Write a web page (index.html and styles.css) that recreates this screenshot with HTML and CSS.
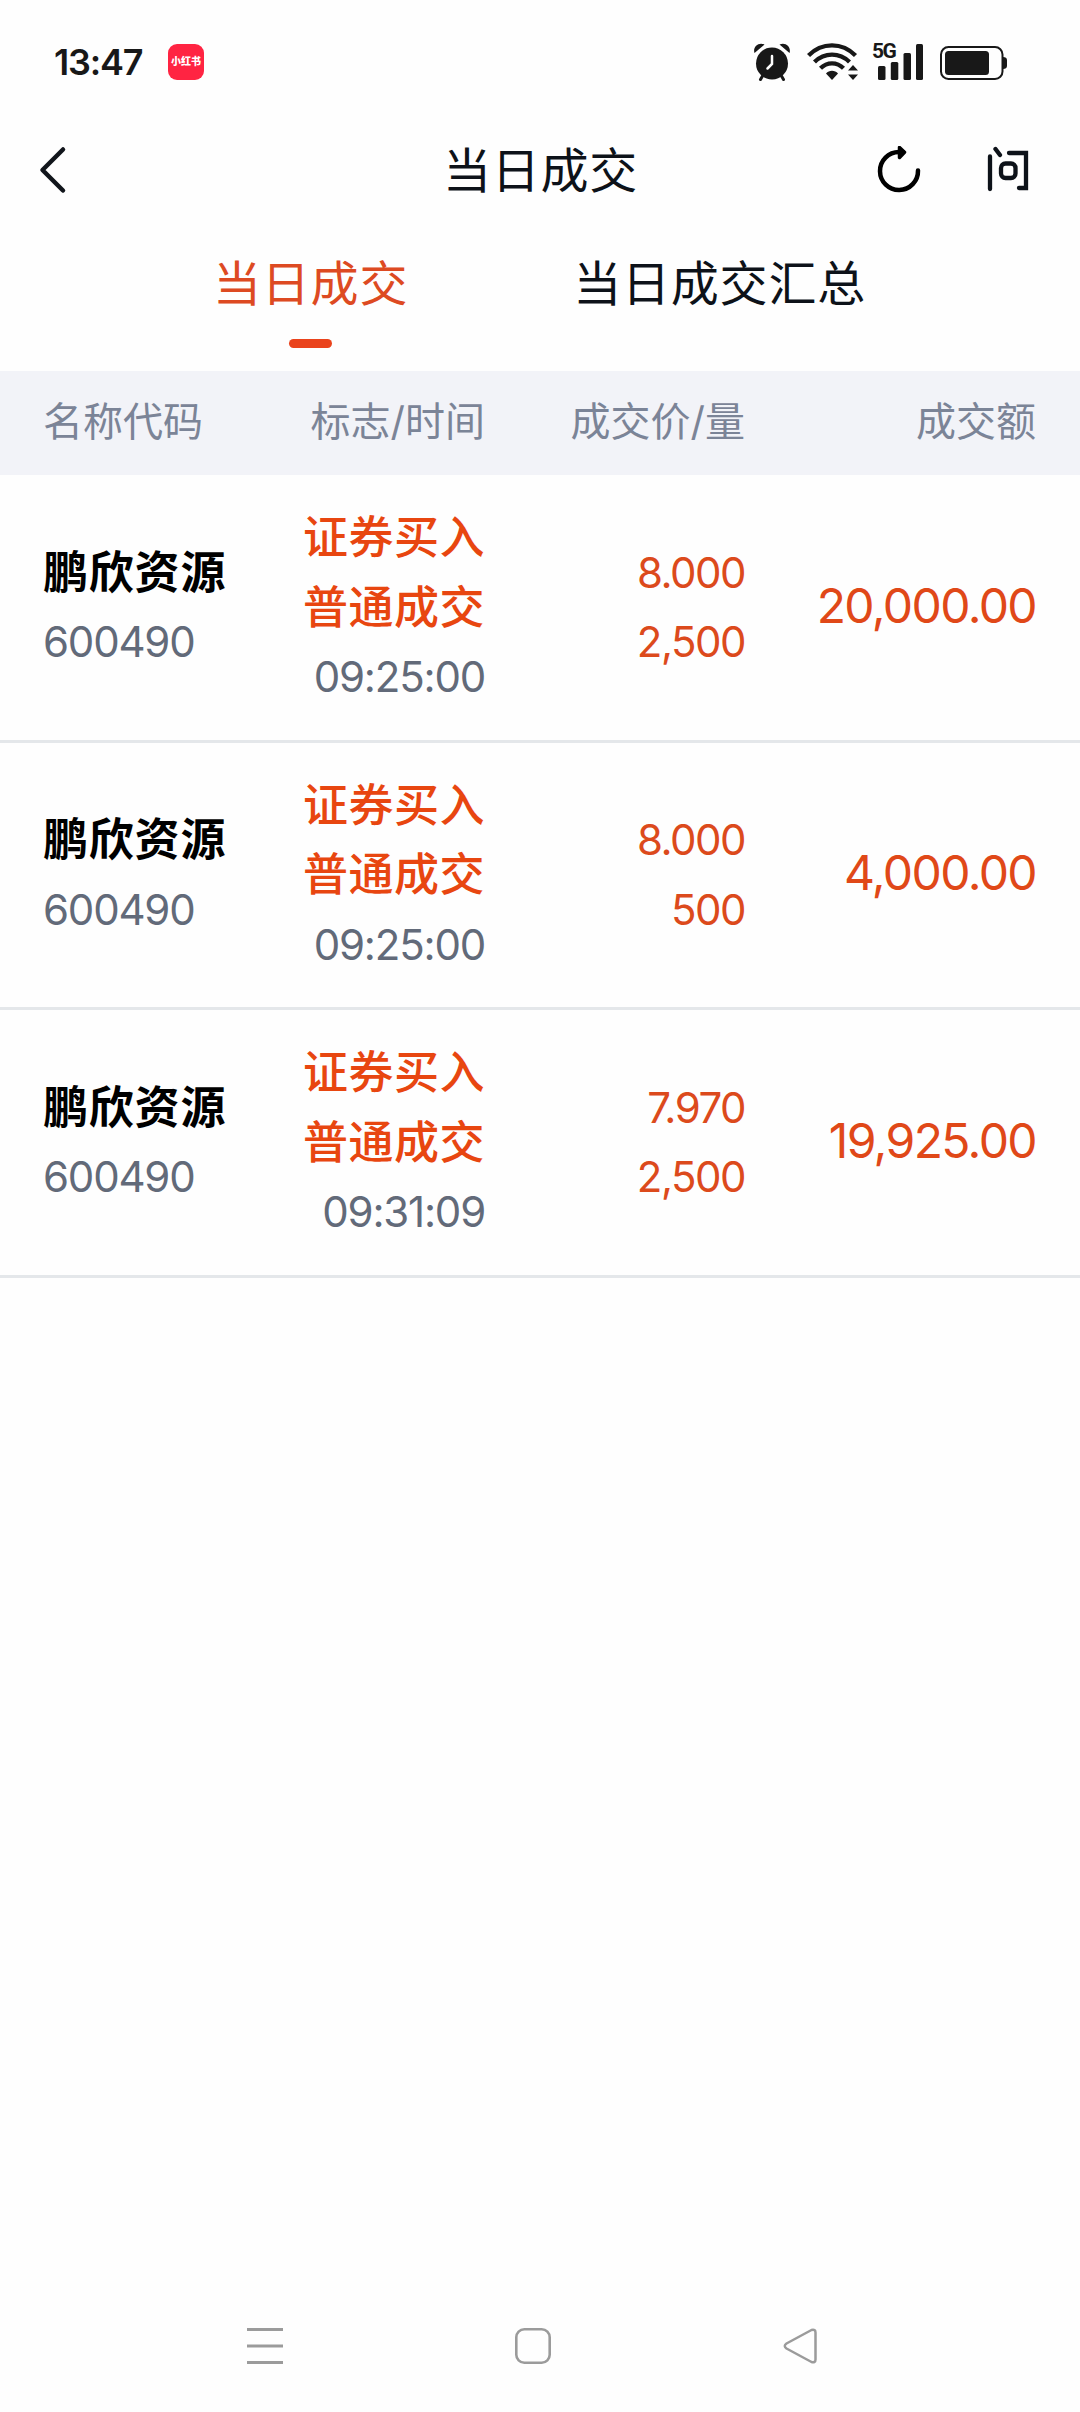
FILE: index.html
```html
<!DOCTYPE html>
<html lang="zh-CN">
<head>
  <meta charset="UTF-8" />
  <meta name="viewport" content="width=device-width, initial-scale=1.0" />
  <title>当日成交</title>
  <link rel="stylesheet" href="styles.css">
</head>
<body>

  <div class="statusbar">
    <span class="clock">13:47</span>
    <span class="app-badge">小红书</span>

    <div class="status-icons">
      <svg class="alarm" width="38" height="38" viewBox="0 0 38 38">
        <circle cx="19" cy="20.500" r="16" fill="#181818"/>
        <path d="M1.500 10C-0.500 4 5.500-1.500 11.500 1.500ZM36.500 10C38.500 4 32.500-1.500 26.500 1.500Z" fill="#181818"/>
        <path d="M9.500 33L7.500 36.500M28.500 33L30.500 36.500" stroke="#181818" stroke-width="3" stroke-linecap="round"/>
        <path d="M19 13V21L14.500 25.500" fill="none" stroke="#fff" stroke-width="2.500" stroke-linecap="round"/>
      </svg>
      <svg class="wifi" width="52" height="38" viewBox="0 0 52 38">
        <g fill="none" stroke="#181818" stroke-width="4.300">
          <path d="M1.500 12.500C15-1 35-1 48.500 12.500"/>
          <path d="M7.500 19C17.500 9.200 32.500 9.200 42.500 19"/>
          <path d="M13.500 25.300C20 18.700 30 18.700 36.500 25.300"/>
        </g>
        <path d="M25 37L19 30.500C22 26.800 28 26.800 31 30.500Z" fill="#181818"/>
        <path d="M41 27.500L46 22L51 27.500ZM41 31.500H51L46 37Z" fill="#181818"/>
      </svg>
      <div class="signal">
        <span class="net">5G</span>
        <svg width="50" height="38" viewBox="0 0 50 38" fill="#181818">
          <rect x="5" y="23" width="7.500" height="14" rx="1.500"/>
          <rect x="17.800" y="19" width="7.500" height="18" rx="1.500"/>
          <rect x="30.500" y="10" width="7.500" height="27" rx="1.500"/>
          <rect x="43" y="1" width="7" height="36" rx="1.500"/>
        </svg>
      </div>
      <svg class="battery" width="68" height="38" viewBox="0 0 68 38">
        <rect x="1" y="4" width="61.500" height="32" rx="7.500" fill="none" stroke="#181818" stroke-width="2"/>
        <rect x="5" y="8" width="44" height="24" rx="3.500" fill="#181818"/>
        <path d="M63 14C65.500 14 67 15 67 17V23C67 25 65.500 26 63 26Z" fill="#181818"/>
      </svg>
    </div>
  </div>

  <div class="navbar">
    <svg class="back" width="28" height="48" viewBox="0 0 28 48">
      <path d="M24 3.500L3.500 24L24 44.500" fill="none" stroke="#11151b" stroke-width="4.500" stroke-linecap="round" stroke-linejoin="round"/>
    </svg>
    <h1>当日成交</h1>
    <div class="actions">
      <svg width="44" height="48" viewBox="0 0 44 48" fill="none" stroke="#000" stroke-width="4.500" stroke-linecap="round" stroke-linejoin="round">
        <path d="M41 24.500A19 19 0 1 1 22 6H26"/>
        <path d="M22.500 1.500L27.500 6.200L22.500 11.500Z" fill="#000" stroke-width="3.500"/>
      </svg>
      <svg width="44" height="48" viewBox="0 0 44 48" fill="none" stroke="#0d1219" stroke-width="4.300" stroke-linecap="round" stroke-linejoin="round">
        <path d="M4 10.500V43M9.500 3L14 9"/>
        <path d="M23 7H40V42H33" stroke-linejoin="miter"/>
        <rect x="15" y="17.500" width="14.500" height="14.500" rx="4.500"/>
      </svg>
    </div>
  </div>

  <div class="tabs">
    <div class="tab active">当日成交</div>
    <div class="tab">当日成交汇总</div>
  </div>

  <div class="row head">
    <span>名称代码</span>
    <span>标志/时间</span>
    <span>成交价/量</span>
    <span>成交额</span>
  </div>

  <div class="row">
    <div>
      <p class="name">鹏欣资源</p>
      <p class="gray">600490</p>
    </div>
    <div>
      <p class="flag">证券买入</p>
      <p class="flag">普通成交</p>
      <p class="gray">09:25:00</p>
    </div>
    <div class="price">
      <p>8.000</p>
      <p>2,500</p>
    </div>
    <div class="amount">20,000.00</div>
  </div>

  <div class="row">
    <div>
      <p class="name">鹏欣资源</p>
      <p class="gray">600490</p>
    </div>
    <div>
      <p class="flag">证券买入</p>
      <p class="flag">普通成交</p>
      <p class="gray">09:25:00</p>
    </div>
    <div class="price">
      <p>8.000</p>
      <p>500</p>
    </div>
    <div class="amount">4,000.00</div>
  </div>

  <div class="row">
    <div>
      <p class="name">鹏欣资源</p>
      <p class="gray">600490</p>
    </div>
    <div>
      <p class="flag">证券买入</p>
      <p class="flag">普通成交</p>
      <p class="gray">09:31:09</p>
    </div>
    <div class="price">
      <p>7.970</p>
      <p>2,500</p>
    </div>
    <div class="amount">19,925.00</div>
  </div>

  <div class="sysnav">
    <svg width="36" height="36" viewBox="0 0 36 36">
      <path d="M0 1.500H36M0 18H36M0 34.500H36" stroke="#9b9b9b" stroke-width="3"/>
    </svg>
    <svg width="36" height="36" viewBox="0 0 36 36">
      <rect x="1.300" y="1.300" width="33.400" height="33.400" rx="8" fill="none" stroke="#9b9b9b" stroke-width="2.600"/>
    </svg>
    <svg width="36" height="36" viewBox="0 0 36 36">
      <path d="M28.500 2L3.500 15.500Q0 18 3.500 20.500L28.500 34Q32.500 35 32.500 31.500V4.500Q32.500 1 28.500 2Z" fill="none" stroke="#9b9b9b" stroke-width="2.500" stroke-linejoin="round"/>
    </svg>
  </div>

</body>
</html>
```
FILE: styles.css
```css
* {
  margin: 0;
  padding: 0;
  box-sizing: border-box;
}

body {
  background: #fefefe;
  font-family: Inter, "Noto Sans CJK SC", sans-serif;
  color: #0d1219;
  min-height: 2412px;
  display: flex;
  flex-direction: column;
}

svg {
  display: block;
  flex: none;
}

.statusbar {
  height: 124px;
  padding-left: 54px;
  display: flex;
  align-items: center;
}

.clock {
  width: 114px;
  font-size: 36px;
  font-weight: 600;
  letter-spacing: -1.200px;
  color: #181818;
}

.app-badge {
  width: 36px;
  height: 36px;
  border-radius: 9px;
  background: #ff2442;
  color: #fff;
  font-size: 10px;
  font-weight: 900;
  line-height: 34px;
  text-align: center;
  white-space: nowrap;
}

.status-icons {
  margin-left: auto;
  padding-right: 72px;
  display: flex;
}

.wifi {
  margin-left: 16px;
}

.signal {
  position: relative;
  margin-left: 14px;
}

.net {
  position: absolute;
  left: -1px;
  top: -2px;
  font-family: Roboto, sans-serif;
  font-size: 21px;
  font-weight: 700;
  line-height: 20px;
  letter-spacing: -1.500px;
  color: #181818;
}

.battery {
  margin-left: 17px;
}

.navbar {
  height: 92px;
  padding: 0 50px 0 39px;
  display: grid;
  grid-template-columns: 1fr auto 1fr;
  align-items: center;
}

.navbar h1 {
  font-size: 48px;
  font-weight: 400;
  letter-spacing: 0.800px;
  padding: 0 0 7px 12px;
}

.actions {
  display: flex;
  justify-content: flex-end;
  gap: 65px;
}

.tabs {
  height: 155px;
  padding-left: 213px;
  display: flex;
  gap: 165px;
}

.tab {
  position: relative;
  font-size: 48px;
  line-height: 135px;
  letter-spacing: 0.800px;
}

.tab.active {
  color: #dd4a22;
}

.tab.active::after {
  content: "";
  position: absolute;
  left: 76px;
  bottom: 23px;
  width: 43px;
  height: 9px;
  border-radius: 5px;
  background: #ea431c;
}

.row {
  height: 267.600px;
  padding: 0 44px 0 43px;
  display: grid;
  grid-template-columns: 191px 251px 260px 1fr;
  align-items: center;
  text-align: right;
  line-height: 69.500px;
  border-bottom: 3px solid #e4e7ea;
}

.row > :first-child {
  text-align: left;
}

.head {
  height: 104px;
  padding-bottom: 3px;
  background: #f2f3f8;
  border-bottom: none;
  font-size: 40px;
  color: #7b8497;
}

.name {
  font-size: 45px;
  font-weight: 700;
  letter-spacing: 0.800px;
  color: #000;
}

.gray {
  font-size: 42px;
  letter-spacing: -1.200px;
  color: #626a79;
}

.flag {
  font-size: 45px;
  font-weight: 500;
  letter-spacing: 0.500px;
  color: #e84610;
}

.price {
  font-size: 42px;
  letter-spacing: -1.500px;
  color: #dc4a1c;
}

.amount {
  padding-bottom: 4px;
  font-size: 48px;
  letter-spacing: -1.600px;
  color: #e04818;
}

.sysnav {
  margin-top: auto;
  height: 84px;
  padding-left: 247px;
  display: flex;
  gap: 232px;
}
```
